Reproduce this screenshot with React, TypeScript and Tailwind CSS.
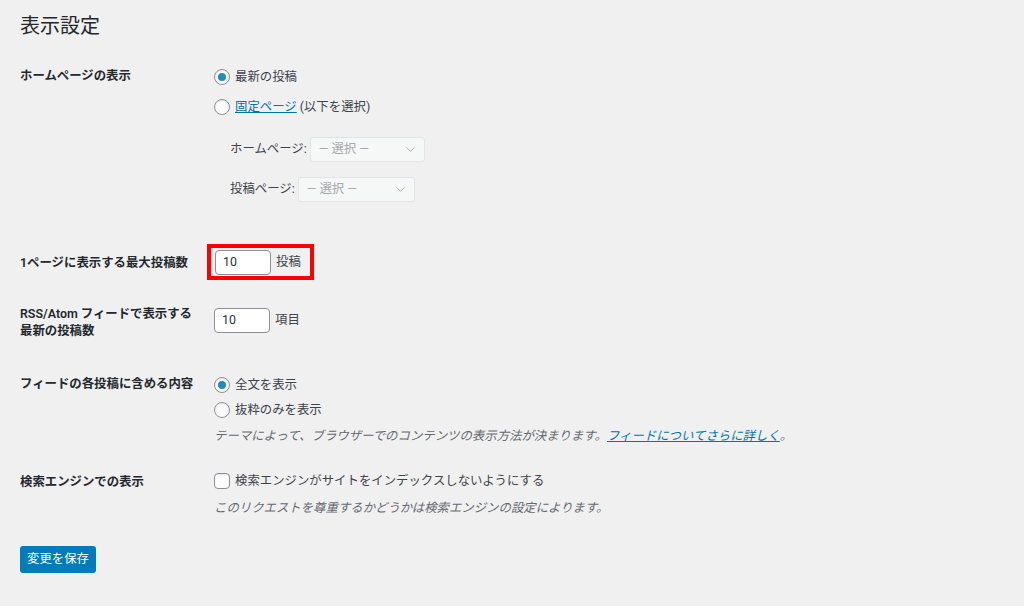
import { ChevronDown } from 'lucide-react'

const font = { fontFamily: 'Roboto, "Noto Sans CJK JP", "Noto Sans", sans-serif' }

function Radio({ checked }: { checked?: boolean }) {
  return (
    <span className="mr-[5px] flex h-[16px] w-[16px] shrink-0 items-center justify-center rounded-full border border-[#8c8f94] bg-white shadow-[inset_0_1px_2px_rgba(0,0,0,0.1)]">
      {checked && <span className="h-[8px] w-[8px] rounded-full bg-[#1e8cbe]" />}
    </span>
  )
}

function DisabledSelect({ width }: { width: string }) {
  return (
    <div
      className={`flex h-[25px] ${width} items-center justify-between rounded-[3px] border border-[#e2e4e7] bg-[#f6f7f7] pl-[8px] pr-[6px] text-[12.4px] text-[#a7aaad]`}
    >
      <span>— 選択 —</span>
      <ChevronDown className="h-[15px] w-[15px] text-[#a7aaad]" strokeWidth={1.5} />
    </div>
  )
}

function NumberInput() {
  return (
    <div className="flex h-[25px] w-[56px] items-center rounded-[4px] border border-[#8c8f94] bg-white pl-[7px] text-[12.4px] text-[#2c3338]">
      10
    </div>
  )
}

const labelClass = 'w-[194px] shrink-0 text-[12.4px] font-semibold leading-[17px] text-[#23282d]'

export default function App() {
  return (
    <div className="min-h-screen bg-[#f0f0f1] px-5 pt-[12px] text-[#3c434a]" style={font}>
      <h1 className="text-[20px] leading-[28px] text-[#23282d]">表示設定</h1>

      {/* home page */}
      <div className="mt-[26px] flex">
        <div className={`${labelClass} pt-[1px]`}>ホームページの表示</div>
        <div className="pt-[1px] text-[12.4px]">
          <label className="flex h-[20px] items-center">
            <Radio checked />
            最新の投稿
          </label>
          <label className="mt-[10px] flex h-[20px] items-center">
            <Radio />
            <a className="text-[#0073aa] underline">固定ページ</a>
            <span className="ml-[3px]">(以下を選択)</span>
          </label>
          <div className="mt-[20px] ml-[16px] flex items-center">
            <span className="mr-[3px]">ホームページ:</span>
            <DisabledSelect width="w-[115px]" />
          </div>
          <div className="mt-[15px] ml-[16px] flex items-center">
            <span className="mr-[3px]">投稿ページ:</span>
            <DisabledSelect width="w-[117px]" />
          </div>
        </div>
      </div>

      {/* posts per page */}
      <div className="mt-[42px] flex items-center">
        <div className={labelClass}>1ページに表示する最大投稿数</div>
        <div className="-ml-[7px] flex h-[36px] w-[107px] items-center border-4 border-[#ff0000] pl-[4px] text-[12.4px]">
          <NumberInput />
          <span className="ml-[5px]">投稿</span>
        </div>
      </div>

      {/* rss */}
      <div className="mt-[25px] flex">
        <div className={labelClass}>
          RSS/Atom フィードで表示する
          <br />
          最新の投稿数
        </div>
        <div className="mt-[3px] flex h-[25px] items-center text-[12.4px]">
          <NumberInput />
          <span className="ml-[5px]">項目</span>
        </div>
      </div>

      {/* feed content */}
      <div className="mt-[36px] flex">
        <div className={labelClass}>フィードの各投稿に含める内容</div>
        <div className="text-[12.4px]">
          <label className="flex h-[20px] items-center">
            <Radio checked />
            全文を表示
          </label>
          <label className="mt-[5px] flex h-[20px] items-center">
            <Radio />
            抜粋のみを表示
          </label>
          <p className="mt-[6px] leading-[20px] italic text-[#646970]">
            テーマによって、ブラウザーでのコンテンツの表示方法が決まります。
            <a className="text-[#0073aa] underline">フィードについてさらに詳しく</a>。
          </p>
        </div>
      </div>

      {/* search engine */}
      <div className="mt-[25px] flex">
        <div className={`${labelClass} pt-[2px]`}>検索エンジンでの表示</div>
        <div className="text-[12.4px]">
          <label className="flex h-[20px] items-center">
            <span className="mr-[5px] h-[16px] w-[16px] shrink-0 rounded-[4px] border border-[#8c8f94] bg-white shadow-[inset_0_1px_2px_rgba(0,0,0,0.1)]" />
            検索エンジンがサイトをインデックスしないようにする
          </label>
          <p className="mt-[7px] leading-[20px] italic text-[#646970]">
            このリクエストを尊重するかどうかは検索エンジンの設定によります。
          </p>
        </div>
      </div>

      <button
        type="button"
        className="mt-[28px] h-[27px] w-[76px] rounded-[3px] bg-[#007cba] text-[12.4px] text-white"
      >
        変更を保存
      </button>
    </div>
  )
}
